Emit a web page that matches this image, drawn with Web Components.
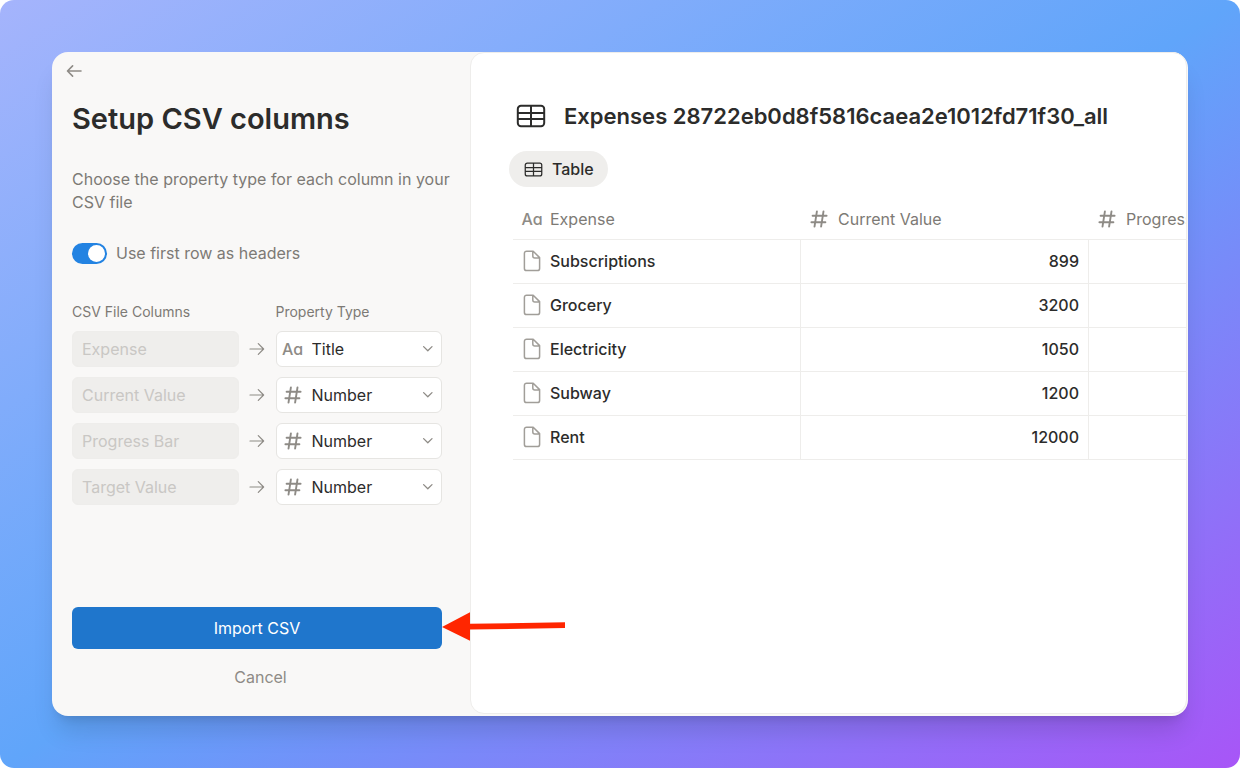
<!DOCTYPE html>
<html lang="en">
<head>
<meta charset="utf-8">
<meta name="viewport" content="width=device-width, initial-scale=1">
<title>Setup CSV columns</title>
<style>
  html { background: #fff; }
  body {
    margin: 0;
    font: 400 16px/24px Inter, "Liberation Sans", sans-serif;
    color: #2c2c2b;
  }
</style>
</head>
<body>
<csv-import-app></csv-import-app>

<script>
const define = (name, html, setup) => {
  const template = document.createElement('template');
  template.innerHTML = html;
  customElements.define(name, class extends HTMLElement {
    connectedCallback() {
      if (this.shadowRoot) return;
      const root = this.attachShadow({ mode: 'open' });
      root.append(template.content.cloneNode(true));
      if (setup) setup(this, root);
    }
  });
};

/* Line icons, each with its own view box */
const ICONS = {
  back: { w: 16, h: 14, d: 'M15 7H1.6M6.6 1.9 1.5 7l5.1 5.1', s: 1.6 },
  arrow: { w: 16, h: 14, d: 'M1 7h13.6M9.3 1.7 14.6 7l-5.3 5.3', s: 1.2 },
  chevron: { w: 12, h: 8, d: 'm1.6 1.6 4.2 4.2L10 1.6', s: 1.3 },
  number: { w: 18, h: 18, d: 'M6.9 1.4 4.5 16.6M13.5 1.4l-2.4 15.2M2.6 5.8h14M1.4 12.2h14', s: 1.9 },
  page: { w: 18, h: 22, d: 'M3.6 1.2h6.6l6.4 6.4v10.8a2.2 2.2 0 0 1-2.2 2.2H3.6a2.2 2.2 0 0 1-2.2-2.2V3.4a2.2 2.2 0 0 1 2.2-2.2zM9.8 1.6V6a2 2 0 0 0 2 2h4.4', s: 1.5 },
  table: { w: 30, h: 24, d: 'M5 1.8h20a3.2 3.2 0 0 1 3.2 3.2v14a3.2 3.2 0 0 1-3.2 3.2H5A3.2 3.2 0 0 1 1.8 19V5A3.2 3.2 0 0 1 5 1.8zM15 2v20M2 9h26M2 15h26', s: 2 }
};
define('line-icon', `
  <style>
    :host { display: inline-flex; flex: none; }
    svg { display: block; fill: none; stroke: currentColor; stroke-linecap: round; stroke-linejoin: round; }
  </style>
  <svg aria-hidden="true"><path/></svg>`,
  (host, root) => {
    const icon = ICONS[host.getAttribute('name')];
    const svg = root.querySelector('svg');
    const width = Number(host.getAttribute('width')) || icon.w;
    svg.setAttribute('viewBox', `0 0 ${icon.w} ${icon.h}`);
    svg.setAttribute('width', width);
    svg.setAttribute('height', Math.round(width * icon.h / icon.w));
    const path = svg.querySelector('path');
    path.setAttribute('d', icon.d);
    path.setAttribute('stroke-width', host.getAttribute('weight') || icon.s);
  });

/* Marker of a property type: "Aa" for a title, a hash for a number */
define('type-icon', `
  <style>
    :host { display: inline-flex; width: 20px; justify-content: center; align-items: center; flex: none; color: #8e8b86; }
    span { font-size: 16px; line-height: 20px; font-weight: 500; font-feature-settings: "cv11"; }
  </style>`,
  (host, root) => {
    root.append(host.getAttribute('type') === 'title'
      ? Object.assign(document.createElement('span'), { textContent: 'Aa' })
      : Object.assign(document.createElement('template'), { innerHTML: '<line-icon name="number"></line-icon>' }).content.cloneNode(true));
  });

define('toggle-switch', `
  <style>
    :host { display: block; color: #7d7a75; }
    label { display: flex; align-items: center; gap: 9px; line-height: 22px; }
    input {
      appearance: none; box-sizing: border-box; flex: none;
      width: 35px; height: 21px; margin: 0; padding: 2px;
      border-radius: 11px; background: #c4c2bf; display: flex;
    }
    input::before { content: ""; width: 17px; height: 17px; border-radius: 50%; background: #fff; }
    input:checked { background: #2383e2; justify-content: flex-end; }
  </style>
  <label><input type="checkbox" role="switch" checked><slot></slot></label>`);

define('column-mapping', `
  <style>
    :host { display: grid; grid-template-columns: 1fr 37px 1fr; align-items: center; }
    input, select {
      appearance: none; box-sizing: border-box; width: 100%; min-width: 0; height: 36px; margin: 0;
      font: inherit; border-radius: 6px;
    }
    input { border: 1px solid #eeedeb; background: #efeeec; color: #c9c7c4; padding: 0 9px; opacity: 1; }
    select { border: 1px solid #e6e5e2; background: #fff; color: #2c2c2b; padding: 0 28px 0 35px; }
    .arrow { justify-self: center; color: #8e8b86; }
    .field { display: grid; align-items: center; }
    .field > * { grid-area: 1 / 1; }
    type-icon { margin-left: 7px; z-index: 1; pointer-events: none; }
    .chevron { justify-self: end; margin-right: 8px; z-index: 1; color: #8e8b86; pointer-events: none; }
  </style>
  <input disabled>
  <line-icon class="arrow" name="arrow"></line-icon>
  <div class="field">
    <select><option>Title</option><option>Number</option><option>Text</option></select>
    <line-icon class="chevron" name="chevron"></line-icon>
  </div>`,
  (host, root) => {
    const column = host.getAttribute('column');
    const type = host.getAttribute('type');
    const input = root.querySelector('input');
    input.value = column;
    input.setAttribute('aria-label', 'CSV file column');
    const select = root.querySelector('select');
    select.value = type;
    select.setAttribute('aria-label', `Property type of ${column}`);
    const icon = document.createElement('type-icon');
    icon.setAttribute('type', type.toLowerCase());
    root.querySelector('.field').append(icon);
  });

define('import-actions', `
  <style>
    :host { display: flex; flex-direction: column; gap: 16px; }
    .primary { position: relative; }
    button { font: inherit; border: 0; margin: 0; padding: 0; background: none; color: #8e8b86; }
    .primary button {
      display: block; width: 100%; height: 42px; border-radius: 6px;
      background: #1f76cc; color: #fff;
    }
    .cancel { align-self: center; line-height: 24px; padding: 0 0 0 7px; }
    .pointer { position: absolute; left: 100%; top: 5px; width: 124px; height: 30px; fill: #ff2600; z-index: 2; }
  </style>
  <div class="primary">
    <button type="submit">Import CSV</button>
    <svg class="pointer" viewBox="0 0 124 30" aria-hidden="true"><path d="M0 15 28 .3v11.5l95-1.5v5.6l-95 1.7v11.2z"/></svg>
  </div>
  <button class="cancel" type="button">Cancel</button>`);

define('import-sidebar', `
  <style>
    :host { display: flex; flex-direction: column; box-sizing: border-box; padding: 10px 28px 27px 20px; }
    .back { align-self: flex-start; display: flex; align-items: center; height: 18px; margin: 0 0 0 -6px; padding: 0; border: 0; background: none; color: #8e8b86; }
    h1 { margin: 21px 0 0; font-size: 29px; line-height: 36px; font-weight: 600; }
    /* the lead may run into the sidebar's right gutter */
    p { margin: 31px -12px 0 0; line-height: 23px; color: #7d7a75; }
    toggle-switch { margin-top: 28px; }
    .labels { display: grid; grid-template-columns: 1fr 1fr; column-gap: 37px; margin-top: 38px; font-size: 14px; line-height: 20px; color: #7d7a75; }
    .rows { display: grid; gap: 10px; margin-top: 9px; }
    import-actions { margin-top: auto; padding-top: 40px; }
  </style>
  <button class="back" type="button" aria-label="Back"><line-icon name="back"></line-icon></button>
  <h1>Setup CSV columns</h1>
  <p>Choose the property type for each column in your CSV file</p>
  <toggle-switch>Use first row as headers</toggle-switch>
  <div class="labels"><span>CSV File Columns</span><span>Property Type</span></div>
  <div class="rows">
    <column-mapping column="Expense" type="Title"></column-mapping>
    <column-mapping column="Current Value" type="Number"></column-mapping>
    <column-mapping column="Progress Bar" type="Number"></column-mapping>
    <column-mapping column="Target Value" type="Number"></column-mapping>
  </div>
  <import-actions></import-actions>`);

const EXPENSES = [['Subscriptions', 899], ['Grocery', 3200], ['Electricity', 1050], ['Subway', 1200], ['Rent', 12000]];
define('data-table', `
  <style>
    :host { display: block; }
    table { border-collapse: separate; border-spacing: 0; table-layout: fixed; width: 864px; }
    th, td { box-sizing: border-box; padding: 0; border-bottom: 1px solid #eeedeb; font-weight: 400; }
    th { height: 41px; color: #7d7a75; text-align: left; }
    td { height: 44px; padding-bottom: 2px; border-right: 1px solid #eeedeb; font-weight: 500; }
    td.number { text-align: right; padding-right: 9px; }
    .cell { display: flex; align-items: center; gap: 8px; padding-left: 9px; }
    th.hash .cell { padding-left: 8px; gap: 9px; }
    td .cell { padding-left: 10px; gap: 9px; }
    td line-icon { color: #a19e99; }
  </style>
  <table>
    <thead><tr>
      <th scope="col"><div class="cell"><type-icon type="title"></type-icon>Expense</div></th>
      <th scope="col" class="hash"><div class="cell"><type-icon type="number"></type-icon>Current Value</div></th>
      <th scope="col" class="hash"><div class="cell"><type-icon type="number"></type-icon>Progress Bar</div></th>
    </tr></thead>
    <tbody></tbody>
  </table>`,
  (host, root) => {
    root.querySelector('tbody').innerHTML = EXPENSES.map(([name, value]) =>
      `<tr><td><div class="cell"><line-icon name="page"></line-icon>${name}</div></td><td class="number">${value}</td><td class="number"></td></tr>`).join('');
  });

define('table-preview', `
  <style>
    :host { display: block; box-sizing: border-box; overflow: hidden; padding: 46px 0 40px 42px; background: #fff; border: 1px solid #eeedeb; border-radius: 14px; }
    header { display: flex; align-items: center; gap: 18px; padding-left: 3px; }
    h2 { margin: 0; font-size: 22px; line-height: 34px; font-weight: 600; white-space: nowrap; }
    .tab {
      display: flex; align-items: center; gap: 9px; height: 36px; margin: 18px 0 12px -4px; padding: 0 14px 0 15px;
      border: 0; border-radius: 18px; background: #efeeec; color: #2c2c2b; font: inherit; font-weight: 500;
    }
  </style>
  <header><line-icon name="table"></line-icon><h2>Expenses 28722eb0d8f5816caea2e1012fd71f30_all</h2></header>
  <button class="tab" type="button"><line-icon name="table" width="19" weight="2"></line-icon>Table</button>
  <data-table></data-table>`);

define('csv-import-app', `
  <style>
    :host {
      display: flex; box-sizing: border-box; min-height: 100vh; padding: 52px; border-radius: 14px;
      background: linear-gradient(to bottom right, #a5b4fc, #60a5fa, #a855f7);
    }
    main {
      flex: 1; min-width: 0; display: grid; grid-template-columns: 418px minmax(0, 1fr);
      border-radius: 16px; background: #f9f8f7;
      box-shadow: 0 20px 25px -5px rgba(0, 0, 0, .12), 0 8px 10px -6px rgba(0, 0, 0, .12);
    }
    table-preview { margin: 0 1px 2px 0; }
    import-sidebar { position: relative; z-index: 1; }
  </style>
  <main><import-sidebar></import-sidebar><table-preview></table-preview></main>`);
</script>
</body>
</html>
